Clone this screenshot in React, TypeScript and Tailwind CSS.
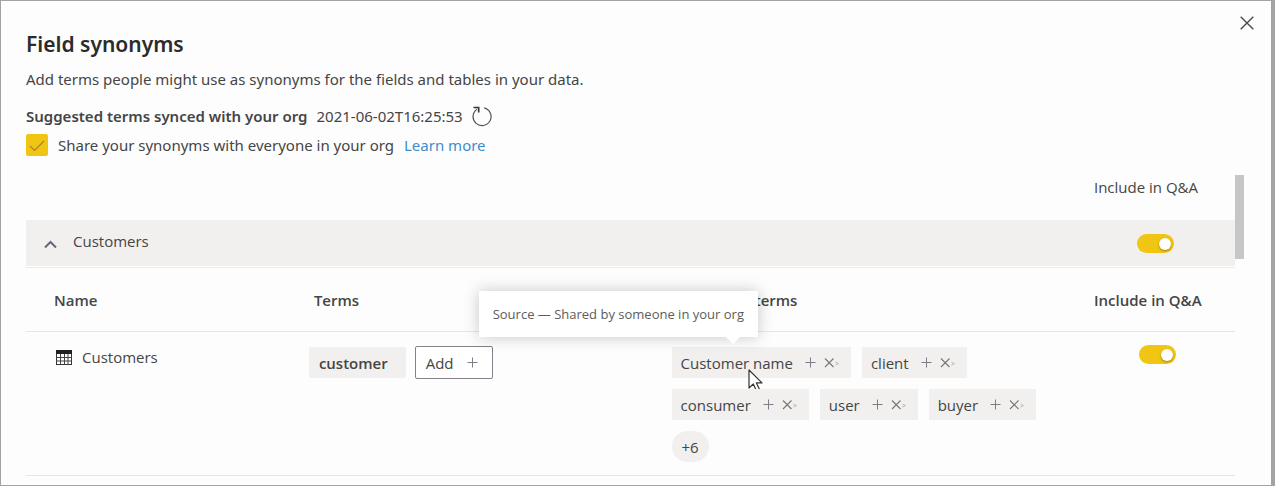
import { useState } from "react";

function CloseIcon() {
  return (
    <svg width="14" height="14" viewBox="0 0 14 14" fill="none" stroke="#4a4a4a" strokeWidth="1.4" aria-hidden="true">
      <path d="M.7.7l12.6 12.6M13.3.7L.7 13.3" />
    </svg>
  );
}

function RefreshIcon() {
  return (
    <svg width="21" height="21" viewBox="0 0 21 21" fill="none" aria-hidden="true">
      <path d="M6 3.2A9 9 0 1 0 13.200 1.900" stroke="#555" strokeWidth="1.2" />
      <path d="M2.500 1.500h5.200v5" stroke="#333" strokeWidth="1.6" />
    </svg>
  );
}

function TableIcon() {
  return (
    <svg width="16" height="15" viewBox="0 0 16 15" aria-hidden="true">
      <rect x=".5" y=".5" width="15" height="14" fill="#fff" stroke="#333" />
      <path d="M0 0h16v4H0z" fill="#222" />
      <path d="M4.5 4v11M8.5 4v11M12 4v11M0 7.5h16M0 11h16" stroke="#444" strokeWidth="1" />
    </svg>
  );
}

function PlusIcon() {
  return (
    <svg width="11" height="11" viewBox="0 0 11 11" aria-hidden="true">
      <path d="M5.5.5v10M.5 5.5h10" stroke="#7d7b85" strokeWidth="1" />
    </svg>
  );
}

function DismissIcon() {
  return (
    <svg width="16" height="11" viewBox="0 0 16 11" fill="none" aria-hidden="true">
      <path d="M1 1.500l8.500 8.500M9.500 1.500L1 10" stroke="#77757a" strokeWidth="1.1" />
      <path d="M11.500 5.200l3 1.400-3 1.400" stroke="#b9b9b9" strokeWidth="1" />
    </svg>
  );
}

function Toggle({ label }: { label: string }) {
  const [on, setOn] = useState(true);
  return (
    <label className="relative block h-[19px] w-[37px] cursor-pointer">
      <input
        type="checkbox"
        role="switch"
        aria-label={label}
        checked={on}
        onChange={() => setOn(!on)}
        className="peer block h-[19px] w-[37px] cursor-pointer appearance-none rounded-full bg-[#b5b5b5] checked:bg-[#f0c514]"
      />
      <span className="pointer-events-none absolute top-[4px] left-[3px] size-[12px] rounded-full bg-white shadow-[0_1px_2px_rgba(90,60,0,0.5)] peer-checked:left-[22px]" />
    </label>
  );
}

function Suggestion({ term, source }: { term: string; source?: string }) {
  return (
    <li className="relative flex h-[31px] items-center bg-[#f1f0ef] pr-[11px] pl-[9px]">
      <span className="mr-[12px]">{term}</span>
      <button type="button" aria-label={`Add ${term}`} className="mr-[8px]">
        <PlusIcon />
      </button>
      <button type="button" aria-label={`Dismiss ${term}`}>
        <DismissIcon />
      </button>
      {source && (
        <>
          <div
            role="tooltip"
            className="absolute right-[93px] bottom-[41px] flex h-[46px] items-center bg-white px-[14px] text-[13px] whitespace-nowrap text-[#5c5c5c] shadow-[0_0_16px_rgba(0,0,0,0.22)]"
          >
            {source}
            <span className="absolute top-full right-[18px] border-x-[7px] border-t-[7px] border-x-transparent border-t-white" />
          </div>
          <svg className="absolute top-[22px] left-[76px]" width="16" height="23" viewBox="0 0 16 23" aria-hidden="true">
            <path
              d="M1 1v18l4.300-4 3 6.500 3-1.400-2.900-6.200H14z"
              fill="#fff"
              stroke="#333"
              strokeWidth="1.200"
              strokeLinejoin="round"
            />
          </svg>
        </>
      )}
    </li>
  );
}

export default function App() {
  return (
    <div className="border border-r-[4px] border-[#a3a3a3] bg-[#fdfdfd] pl-[25px] font-['Open_Sans','Noto_Sans',sans-serif] text-[15px] leading-5 text-[#454545]">
      <header className="flex items-start justify-between pr-[17px] font-['Noto_Sans','Open_Sans',sans-serif]">
        <div className="pt-[28px]">
          <h1 className="text-[21px] leading-[30px] font-semibold text-[#2b2b2b]">Field synonyms</h1>
          <p className="mt-[10px]">Add terms people might use as synonyms for the fields and tables in your data.</p>
          <div className="mt-[15px] flex h-[24px] items-center">
            <span className="font-semibold">Suggested terms synced with your org</span>
            <span className="ml-[9px]">2021-06-02T16:25:53</span>
            <button type="button" aria-label="Sync now" className="ml-[8px]">
              <RefreshIcon />
            </button>
          </div>
          <div className="mt-[5px] flex h-[23px] items-center">
            <label className="relative flex items-center">
              <input
                type="checkbox"
                defaultChecked
                className="peer mr-[10px] size-[22px] appearance-none rounded-[2px] border border-[#f0c514] checked:bg-[#f0c514]"
              />
              <svg
                className="pointer-events-none absolute top-0 left-0 hidden peer-checked:block"
                width="22"
                height="22"
                viewBox="0 0 22 22"
                fill="none"
                aria-hidden="true"
              >
                <path d="M4 12l4.500 4.500L18 7" stroke="#a8832a" strokeWidth="1.200" />
              </svg>
              Share your synonyms with everyone in your org
            </label>
            <a href="#learn-more" className="ml-[10px] text-[#3f8dca]">
              Learn more
            </a>
          </div>
        </div>
        <button type="button" aria-label="Close" className="mt-[15px]">
          <CloseIcon />
        </button>
      </header>

      <div className="mt-[19px] flex items-start pr-[27px] pb-[9px]">
        <main className="min-w-0 flex-1">
          <div className="flex h-[45px] justify-end pt-[2px] pr-[37px]">Include in Q&amp;A</div>
          <section>
            <div className="flex h-[46px] items-center justify-between bg-[#f1f0ef] pr-[61px] pl-[18px]">
              <button type="button" aria-expanded="true" className="flex items-center gap-[16px] pb-[5px]">
                <svg className="mt-[7px]" width="13" height="9" viewBox="0 0 13 9" fill="none" aria-hidden="true">
                  <path d="M1 7.500l5.500-5.500L12 7.500" stroke="#66667f" strokeWidth="2" />
                </svg>
                Customers
              </button>
              <Toggle label="Include Customers in Q&A" />
            </div>
            <table className="mt-px w-full table-fixed border-t border-[#ebebeb] text-left">
              <thead>
                <tr className="h-[64px] border-b border-[#e6e6e6]">
                  <th className="w-[23.400%] pl-[28px] font-semibold">Name</th>
                  <th className="w-[30%] pl-[5px] font-semibold">Terms</th>
                  <th className="pl-[5px] font-semibold">Suggested terms</th>
                  <th className="w-[164px] pl-[23px] font-semibold">Include in Q&amp;A</th>
                </tr>
              </thead>
              <tbody>
                <tr className="border-b border-[#e6e6e6] align-top">
                  <td className="pt-[15px] pl-[30px]">
                    <div className="flex items-center gap-[10px]">
                      <TableIcon />
                      Customers
                    </div>
                  </td>
                  <td className="pt-[14px]">
                    <div className="flex items-center gap-[9px]">
                      <span className="flex h-[31px] items-center rounded-[2px] bg-[#f1f0ef] pr-[18px] pl-[10px] font-semibold">
                        customer
                      </span>
                      <button
                        type="button"
                        className="flex h-[33px] items-center gap-[13px] rounded-[2px] border border-[#85808a] bg-white pr-[14px] pl-[10px]"
                      >
                        Add
                        <PlusIcon />
                      </button>
                    </div>
                  </td>
                  <td className="pt-[15px] pb-[13px]">
                    <ul className="flex flex-wrap gap-[11px]">
                      <Suggestion term="Customer name" source="Source — Shared by someone in your org" />
                      <Suggestion term="client" />
                      <Suggestion term="consumer" />
                      <Suggestion term="user" />
                      <Suggestion term="buyer" />
                      <li>
                        <button type="button" className="h-[31px] w-[37px] rounded-full bg-[#f1f0ef]">
                          +6
                        </button>
                      </li>
                    </ul>
                  </td>
                  <td className="pt-[13px] pl-[68px]">
                    <Toggle label="Include Customers table in Q&A" />
                  </td>
                </tr>
              </tbody>
            </table>
          </section>
        </main>
        <div className="h-[84px] w-[9px] bg-[#c6c6c6]" />
      </div>
    </div>
  );
}
